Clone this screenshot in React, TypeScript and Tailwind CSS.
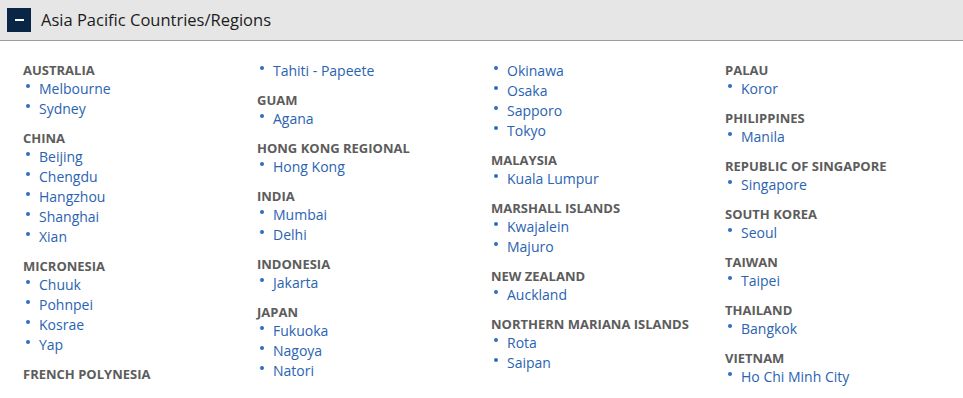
import React from "react";

type Group = { name?: string; cities: string[] };

// columns split by hand to match the reference column breaks
const columns: Group[][] = [
  [
    { name: "Australia", cities: ["Melbourne", "Sydney"] },
    { name: "China", cities: ["Beijing", "Chengdu", "Hangzhou", "Shanghai", "Xian"] },
    { name: "Micronesia", cities: ["Chuuk", "Pohnpei", "Kosrae", "Yap"] },
    { name: "French Polynesia", cities: [] },
  ],
  [
    { cities: ["Tahiti - Papeete"] },
    { name: "Guam", cities: ["Agana"] },
    { name: "Hong Kong Regional", cities: ["Hong Kong"] },
    { name: "India", cities: ["Mumbai", "Delhi"] },
    { name: "Indonesia", cities: ["Jakarta"] },
    { name: "Japan", cities: ["Fukuoka", "Nagoya", "Natori"] },
  ],
  [
    { cities: ["Okinawa", "Osaka", "Sapporo", "Tokyo"] },
    { name: "Malaysia", cities: ["Kuala Lumpur"] },
    { name: "Marshall Islands", cities: ["Kwajalein", "Majuro"] },
    { name: "New Zealand", cities: ["Auckland"] },
    { name: "Northern Mariana Islands", cities: ["Rota", "Saipan"] },
  ],
  [
    { name: "Palau", cities: ["Koror"] },
    { name: "Philippines", cities: ["Manila"] },
    { name: "Republic of Singapore", cities: ["Singapore"] },
    { name: "South Korea", cities: ["Seoul"] },
    { name: "Taiwan", cities: ["Taipei"] },
    { name: "Thailand", cities: ["Bangkok"] },
    { name: "Vietnam", cities: ["Ho Chi Minh City"] },
  ],
];

function City({ label }: { label: string }) {
  return (
    <li className="relative h-5 pl-4 text-[14px] leading-5 text-[#2a63b1]">
      <span className="absolute left-[3px] top-[5px] h-1 w-1 rounded-full bg-[#2a6fc0]" />
      <a href="#">{label}</a>
    </li>
  );
}

export default function App() {
  return (
    <div className="h-[398px] w-[963px] overflow-hidden bg-white font-['Open_Sans',sans-serif]">
      <div className="flex h-[41px] items-center gap-[10px] border-b border-[#9c9c9c] bg-[#e6e6e6] pl-[7px]">
        <button className="flex h-6 w-6 items-center justify-center bg-[#0a2647]">
          <span className="h-[2px] w-[9px] bg-white" />
        </button>
        <h2 className="text-[16.5px] leading-none text-[#1c1c1c]">Asia Pacific Countries/Regions</h2>
      </div>

      <div className="grid grid-cols-[repeat(4,234px)] pl-[23px] pt-[20px]">
        {columns.map((col, i) => (
          <div key={i} className="flex flex-col gap-[10px]">
            {col.map((g, j) => (
              <div key={j}>
                {g.name && (
                  <h3 className="h-[18px] text-[13px] font-bold uppercase leading-[18px] text-[#5c5c5c]">
                    {g.name}
                  </h3>
                )}
                {g.cities.length > 0 && (
                  <ul>
                    {g.cities.map((c) => (
                      <City key={c} label={c} />
                    ))}
                  </ul>
                )}
              </div>
            ))}
          </div>
        ))}
      </div>
    </div>
  );
}
